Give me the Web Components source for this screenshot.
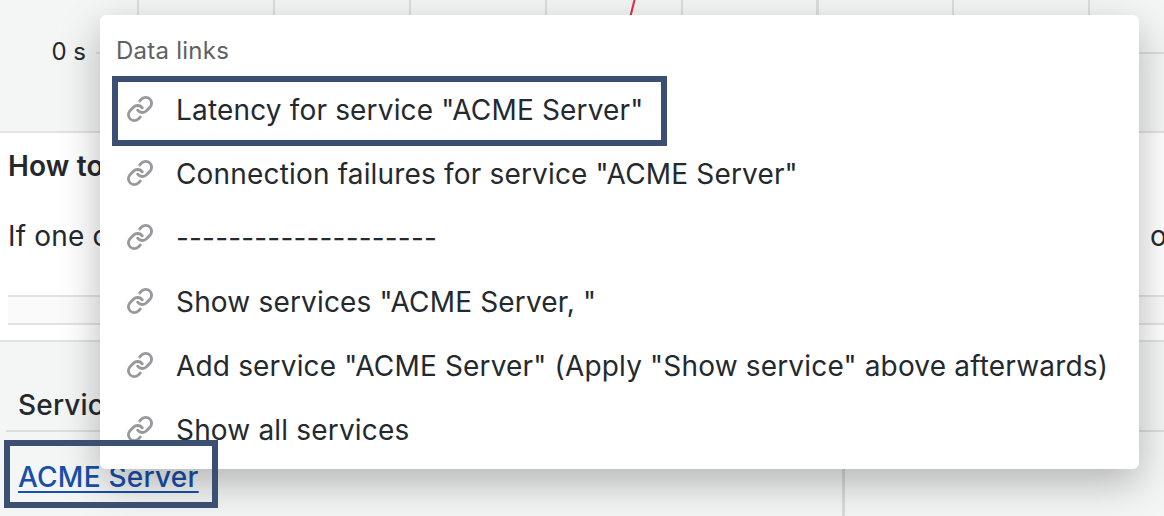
<!DOCTYPE html>
<html>
<head>
<meta charset="utf-8">
<style>
  html, body { margin: 0; height: 100%; overflow: hidden; }
  body {
    position: relative;
    width: 1164px;
    height: 516px;
    background: #f4f5f5;
    color: #24292e;
    font: 400 28px Inter, "Liberation Sans", sans-serif;
    letter-spacing: 0.17px;
    display: flex;
    flex-direction: column;
  }
</style>
</head>
<body>
<graph-panel></graph-panel>
<text-panel title="How to">If one of</text-panel>
<table-panel heading="Service" link="ACME Server"></table-panel>

<link-menu heading="Data links">
  <link-row focused>Latency for service "ACME Server"</link-row>
  <link-row>Connection failures for service "ACME Server"</link-row>
  <link-row>--------------------</link-row>
  <link-row>Show services "ACME Server, "</link-row>
  <link-row>Add service "ACME Server" (Apply "Show service" above afterwards)</link-row>
  <link-row>Show all services</link-row>
</link-menu>
<focus-ring></focus-ring>

<script>
class GraphPanel extends HTMLElement {
  constructor() {
    super();
    this.attachShadow({ mode: 'open' }).innerHTML = `
      <style>
        :host { display: flex; height: 131px; flex: none; border-bottom: 2px solid #e2e3e3; }
        .axis { width: 96px; flex: none; box-sizing: border-box; padding: 36px 10px 0 0; text-align: right; font-size: 24px; line-height: 32px; letter-spacing: 0; }
        .plot {
          flex: 1;
          position: relative;
          background:
            linear-gradient(#dcdddd, #dcdddd) 0 52px / 100% 2px no-repeat,
            repeating-linear-gradient(90deg, transparent 0 41.5px, #dcdddd 41.5px 43.5px, transparent 43.5px 135.8px);
        }
        svg { position: absolute; left: 530px; top: 0; }
      </style>
      <div class="axis">0 s</div>
      <div class="plot">
        <svg width="12" height="20"><path d="M8.5 0L4.5 16" stroke="#e02f44" stroke-width="2" fill="none"/></svg>
      </div>`;
  }
}

class TextPanel extends HTMLElement {
  constructor() {
    super();
    this.attachShadow({ mode: 'open' }).innerHTML = `
      <style>
        :host { display: block; flex: none; height: 207px; background: #fff; border-bottom: 2px solid #e2e3e3; overflow: hidden; }
        h3 { margin: 0; padding: 15px 8px 0; font-size: 28px; line-height: 36px; font-weight: 600; }
        .line { display: flex; justify-content: space-between; padding: 34px 0 0 8px; height: 36px; line-height: 36px; white-space: nowrap; }
        .line b { font-weight: 400; width: 14px; }
        .bar { margin: 41px 0 0 8px; height: 26px; background: #fafafa; border: solid #e2e3e3; border-width: 2px 0; }
      </style>
      <h3>${this.getAttribute('title')}</h3>
      <div class="line"><span><slot></slot></span><b>o</b></div>
      <div class="bar"></div>`;
  }
}

class TablePanel extends HTMLElement {
  constructor() {
    super();
    this.attachShadow({ mode: 'open' }).innerHTML = `
      <style>
        :host { display: block; flex: 1; }
        .head { margin-left: 6px; height: 88px; border-bottom: 2px solid #dcdddd; box-sizing: content-box; padding: 0 0 0 12px; font-weight: 500; line-height: 46px; display: flex; align-items: flex-end; }
        .head span { margin-bottom: 2px; }
        .row { display: flex; height: 90px; }
        .cell { width: 845px; padding: 27px 0 0 18px; box-sizing: border-box; border-right: 3px solid #d9dada; line-height: 36px; }
        a { color: #1650ad; font-weight: 500; letter-spacing: 0.25px; text-decoration-thickness: 2px; text-underline-offset: 4px; }
      </style>
      <div class="head"><span>${this.getAttribute('heading')}</span></div>
      <div class="row"><div class="cell"><a href="#">${this.getAttribute('link')}</a></div></div>`;
  }
}

class LinkMenu extends HTMLElement {
  constructor() {
    super();
    this.attachShadow({ mode: 'open' }).innerHTML = `
      <style>
        :host {
          position: absolute;
          left: 100px;
          top: 15px;
          width: 1039px;
          height: 454px;
          background: #fff;
          border-radius: 6px;
          box-shadow: 0 14px 40px rgba(0, 0, 0, 0.27);
          box-sizing: border-box;
          padding: 16px 15px 0;
          overflow: hidden;
        }
        .title { height: 48px; line-height: 40px; padding-left: 1px; font-size: 24px; letter-spacing: 0.25px; color: #5e6166; }
      </style>
      <div class="title">${this.getAttribute('heading')}</div>
      <slot></slot>`;
  }
}

class LinkRow extends HTMLElement {
  constructor() {
    super();
    this.attachShadow({ mode: 'open' }).innerHTML = `
      <style>
        :host { display: flex; width: fit-content; height: 64px; align-items: center; gap: 22px; padding: 0 20px 0 11px; white-space: nowrap; }
        :host([focused]) { outline: 6px solid #3a4f72; outline-offset: -3px; }
        svg { width: 28px; height: 28px; flex: none; margin-top: -4px; }
        span { margin-top: -2px; }
      </style>
      <svg viewBox="0 0 24 24" fill="none" stroke="#96989b" stroke-width="2.4" stroke-linecap="round" stroke-linejoin="round">
        <path d="M10 13a5 5 0 0 0 7.54.54l3-3a5 5 0 0 0-7.07-7.07l-1.72 1.71"/>
        <path d="M14 11a5 5 0 0 0-7.54-.54l-3 3a5 5 0 0 0 7.07 7.07l1.71-1.71"/>
      </svg>
      <span><slot></slot></span>`;
  }
}

// second focus outline sits on top of the menu, the link itself is under it
class FocusRing extends HTMLElement {
  constructor() {
    super();
    this.attachShadow({ mode: 'open' }).innerHTML = `
      <style>
        :host { position: absolute; left: 4px; top: 440px; width: 214px; height: 68px; box-sizing: border-box; border: 6px solid #3a4f72; }
      </style>`;
  }
}

customElements.define('graph-panel', GraphPanel);
customElements.define('text-panel', TextPanel);
customElements.define('table-panel', TablePanel);
customElements.define('link-menu', LinkMenu);
customElements.define('link-row', LinkRow);
customElements.define('focus-ring', FocusRing);
</script>
</body>
</html>
